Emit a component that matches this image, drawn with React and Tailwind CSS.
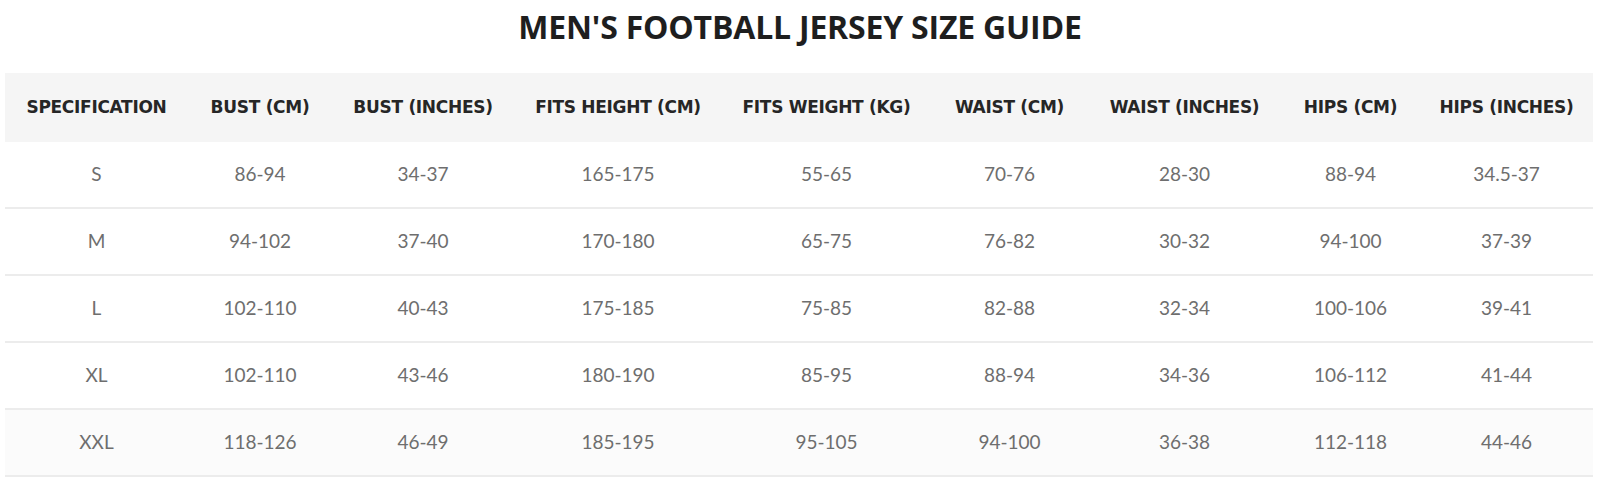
import React from "react";

const headers = [
  "SPECIFICATION",
  "BUST (CM)",
  "BUST (INCHES)",
  "FITS HEIGHT (CM)",
  "FITS WEIGHT (KG)",
  "WAIST (CM)",
  "WAIST (INCHES)",
  "HIPS (CM)",
  "HIPS (INCHES)",
];

const rows = [
  ["S", "86-94", "34-37", "165-175", "55-65", "70-76", "28-30", "88-94", "34.5-37"],
  ["M", "94-102", "37-40", "170-180", "65-75", "76-82", "30-32", "94-100", "37-39"],
  ["L", "102-110", "40-43", "175-185", "75-85", "82-88", "32-34", "100-106", "39-41"],
  ["XL", "102-110", "43-46", "180-190", "85-95", "88-94", "34-36", "106-112", "41-44"],
  ["XXL", "118-126", "46-49", "185-195", "95-105", "94-100", "36-38", "112-118", "44-46"],
];

const cols =
  "grid grid-cols-[183px_144px_182px_208px_209px_157px_193px_139px_173px]";

export default function App() {
  return (
    <div className="w-[1600px] h-[485px] bg-white overflow-hidden">
      <h1 className="h-[50px] pt-[4px] flex items-center justify-center text-[32px] font-bold text-[#1e1e1e] font-['Open_Sans',sans-serif] tracking-[-0.2px]">
        MEN'S FOOTBALL JERSEY SIZE GUIDE
      </h1>
      <div className="ml-[5px] mt-[23px] w-[1588px]">
        <div className={`${cols} h-[69px] bg-[#f5f5f5]`}>
          {headers.map((h) => (
            <div
              key={h}
              className="flex items-center justify-center text-[17px] font-bold text-[#262626] font-['DejaVu_Sans',sans-serif] tracking-[-0.3px] whitespace-nowrap"
            >
              {h}
            </div>
          ))}
        </div>
        {rows.map((r, i) => (
          <div
            key={r[0]}
            className={`${cols} h-[67px] border-b-2 border-[#ececec] ${
              i === 4 ? "bg-[#fbfbfb]" : "bg-white"
            }`}
          >
            {r.map((c, j) => (
              <div
                key={j}
                className="flex items-center justify-center text-[19px] text-[#6e6e6e] font-['Lato',sans-serif]"
              >
                {c}
              </div>
            ))}
          </div>
        ))}
      </div>
    </div>
  );
}
